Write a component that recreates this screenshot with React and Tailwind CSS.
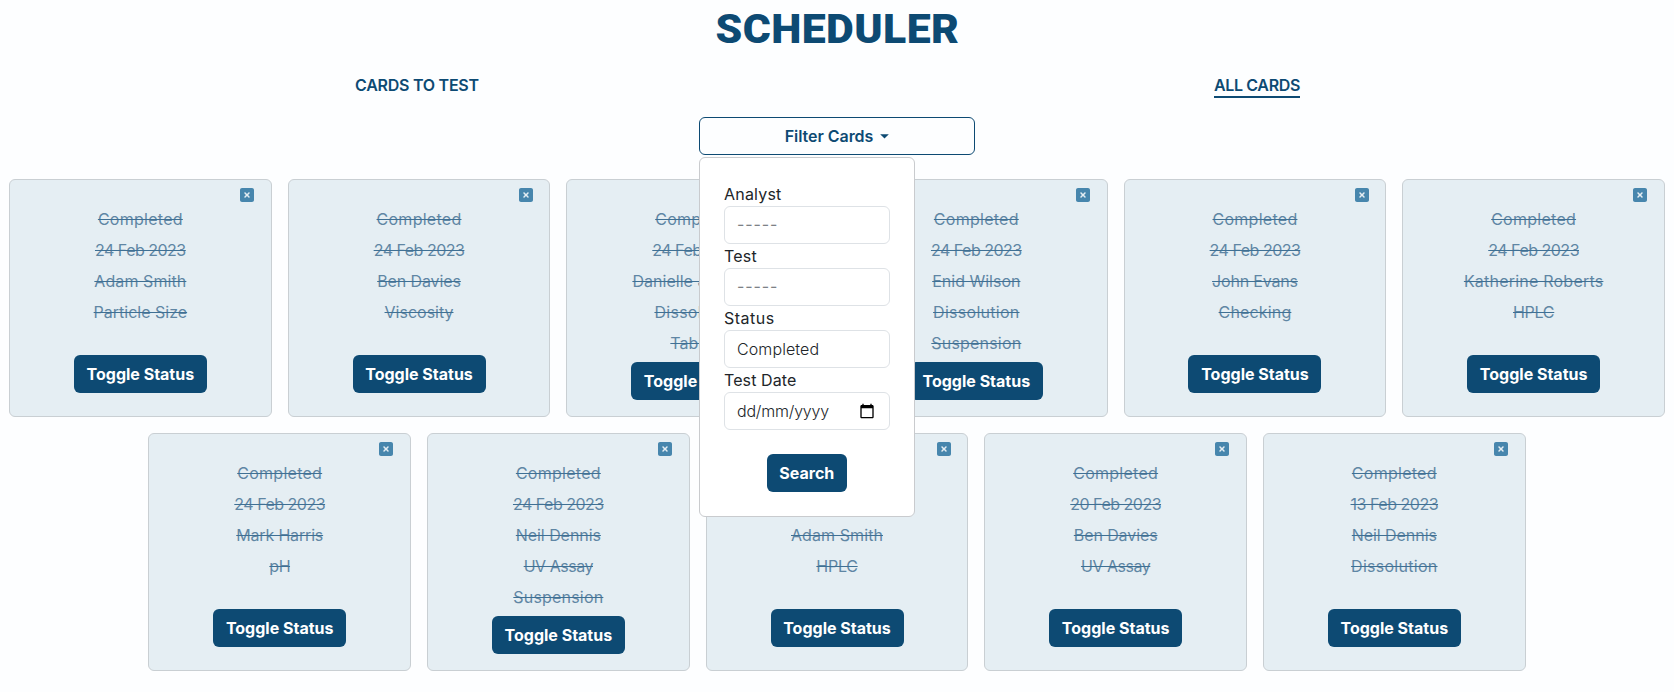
import { FaSquareXmark } from "react-icons/fa6";

const cards = [
  ["Completed", "24 Feb 2023", "Adam Smith", "Particle Size"],
  ["Completed", "24 Feb 2023", "Ben Davies", "Viscosity"],
  ["Completed", "24 Feb 2023", "Danielle Johnson", "Dissolution", "Tablets"],
  ["Completed", "24 Feb 2023", "Enid Wilson", "Dissolution", "Suspension"],
  ["Completed", "24 Feb 2023", "John Evans", "Checking"],
  ["Completed", "24 Feb 2023", "Katherine Roberts", "HPLC"],
  ["Completed", "24 Feb 2023", "Mark Harris", "pH"],
  ["Completed", "24 Feb 2023", "Neil Dennis", "UV Assay", "Suspension"],
  ["Completed", "24 Feb 2023", "Adam Smith", "HPLC"],
  ["Completed", "20 Feb 2023", "Ben Davies", "UV Assay"],
  ["Completed", "13 Feb 2023", "Neil Dennis", "Dissolution"],
];

const tracking = {
  Completed: "tracking-[0.27px]",
  "24 Feb 2023": "tracking-[-0.5px]",
  "20 Feb 2023": "tracking-[-0.5px]",
  "13 Feb 2023": "tracking-[-0.48px]",
  "Adam Smith": "tracking-[0.08px]",
  "Ben Davies": "tracking-[-0.1px]",
  "Danielle Johnson": "tracking-[0.04px]",
  Dissolution: "tracking-[0.28px]",
  Suspension: "tracking-[0.19px]",
  "John Evans": "tracking-[-0.18px]",
  Checking: "tracking-[0.15px]",
  "Katherine Roberts": "tracking-[0.22px]",
  HPLC: "tracking-[-0.28px]",
  "Mark Harris": "tracking-[-0.17px]",
  pH: "tracking-[-0.5px]",
  "Neil Dennis": "tracking-[-0.06px]",
  "UV Assay": "tracking-[-0.47px]",
};

function Card({ lines }) {
  return (
    <article className="flex h-[238px] w-[262.67px] flex-col items-center rounded-md border border-[#c9cfd3] bg-[#e5eef3]">
      <div className="flex h-[27px] w-full shrink-0 justify-end pt-[7px] pr-[15.7px] text-[#4786ad]">
        <FaSquareXmark size={16} />
      </div>
      <ul className="flex min-h-[148px] flex-col gap-[7px] pb-[7px] text-center text-[#5f86a4]">
        {lines.map((line, i) => (
          <li key={i} className="h-6 leading-6">
            <span className={`line-through decoration-[#3f7094] decoration-1 ${tracking[line] || ""}`}>{line}</span>
          </li>
        ))}
      </ul>
      <button className="h-[38px] w-[133px] shrink-0 rounded-md bg-[#0d4a73] font-bold text-white">Toggle Status</button>
    </article>
  );
}

const inputClass =
  "block h-[38px] w-full rounded-md border border-[#dee2e6] bg-white px-3 font-light text-[#212529]";
const emptyInputClass = "pb-[3px] tracking-[0.9px] placeholder:font-normal placeholder:text-[#7d8186]";

function CalendarIcon() {
  return (
    <svg viewBox="0 0 24 24" className="h-4 w-4" fill="#000">
      <path d="M20 3h-1V1h-2v2H7V1H5v2H4c-1.1 0-2 .9-2 2v16c0 1.1.9 2 2 2h16c1.1 0 2-.9 2-2V5c0-1.1-.9-2-2-2zm0 18H4V8h16v13z" />
    </svg>
  );
}

function FilterMenu() {
  return (
    <form className="absolute top-10 left-0 z-10 h-[360px] w-[215.7px] rounded-md border border-[#c9cbce] bg-white p-6 text-left">
      <label className="block leading-6">
        <span className="tracking-[0.2px]">Analyst</span>
        <input className={`${inputClass} ${emptyInputClass}`} placeholder="-----" />
      </label>
      <label className="block leading-6">
        <span className="tracking-[0.2px]">Test</span>
        <input className={`${inputClass} ${emptyInputClass}`} placeholder="-----" />
      </label>
      <label className="block leading-6">
        <span className="tracking-[0.5px]">Status</span>
        <input className={`${inputClass} tracking-[0.1px]`} defaultValue="Completed" />
      </label>
      <div className="leading-6">
        <span className="tracking-[0.1px]">Test Date</span>
        <div className="flex h-[38px] items-center justify-between rounded-md border border-[#dee2e6] pr-[13.7px] pl-3 font-light">
          <span className="tracking-[-0.2px]">dd/mm/yyyy</span>
          <CalendarIcon />
        </div>
      </div>
      <div className="mt-6 flex justify-center">
        <button type="button" className="h-[38px] w-20 rounded-md bg-[#0d4a73] font-bold text-white">Search</button>
      </div>
    </form>
  );
}

export default function App() {
  return (
    <div className="min-h-[692px] bg-[#fdfeff] font-['Inter',sans-serif] text-base text-[#212529]">
      <h1 className="flex justify-center pt-2.5 font-['Roboto',sans-serif] text-[39.8px] leading-10 font-black tracking-[0.4px] text-[#0d4a73]">
        <span className="scale-x-[1.075]">SCHEDULER</span>
      </h1>
      <nav className="mt-[23px] flex h-[25px] justify-between pr-[374px] pl-[355px] leading-6 font-semibold text-[#0d4a73]">
        <a className="tracking-[-0.25px]">CARDS TO TEST</a>
        <a className="w-[86px] border-b-2 border-[#0d4a73] tracking-[-0.36px] whitespace-nowrap">ALL CARDS</a>
      </nav>
      <div className="relative mx-auto mt-[19px] w-[276px]">
        <button className="flex h-[38px] w-full items-center justify-center rounded-md border border-[#0d4a73] font-semibold text-[#0d4a73]">
          <span className="tracking-[-0.04px]">Filter Cards</span>
          <svg viewBox="0 0 10 5" className="ml-[7px] h-[5px] w-[9px]" fill="currentColor">
            <path d="M0.2 0h9.6L5 4.8z" />
          </svg>
        </button>
        <FilterMenu />
      </div>
      <main className="mt-6 flex flex-wrap justify-center gap-4">
        {cards.map((lines, i) => (
          <Card key={i} lines={lines} />
        ))}
      </main>
    </div>
  );
}
